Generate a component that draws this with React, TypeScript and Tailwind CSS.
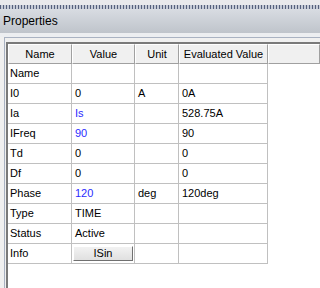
import React from "react";

const rows: [string, string, string, string, string?][] = [
  ["Name", "", "", ""],
  ["I0", "0", "A", "0A"],
  ["Ia", "Is", "", "528.75A", "blue"],
  ["IFreq", "90", "", "90", "blue"],
  ["Td", "0", "", "0"],
  ["Df", "0", "", "0"],
  ["Phase", "120", "deg", "120deg", "blue"],
  ["Type", "TIME", "", ""],
  ["Status", "Active", "", ""],
];

function HeaderCell({ children, className = "" }: any) {
  return (
    <div
      className={`flex h-[20px] items-center justify-center border-t border-l border-white border-r border-b border-r-[#a0a0a0] border-b-[#a0a0a0] bg-[#f0f0f0] ${className}`}
    >
      {children}
    </div>
  );
}

export default function App() {
  return (
    <div
      className="flex h-[288px] w-[320px] flex-col overflow-hidden bg-[#f0f0f0] text-[11px] text-black"
      style={{ fontFamily: '"Liberation Sans", Arial, sans-serif' }}
    >
      <div className="h-[5px] bg-[#e8e9ec]" />
      <div className="h-[4px] bg-[linear-gradient(90deg,#55607c_50%,#c4cad6_50%)] bg-[length:3px_2px]" />
      <div className="flex h-[24px] items-center bg-[linear-gradient(#d8dce2,#bfc4cb)] pl-[3px] text-[12px]">
        Properties
      </div>
      <div className="h-[4px] bg-[#eceef1]" />

      <div className="ml-[4px] flex flex-1 flex-col border-t border-l border-[#a9b2c2] bg-[#f0f0f0] pt-[4px] pl-[1px]">
        <div className="flex flex-1 flex-col border-t-2 border-l-2 border-[#7a7a7a] bg-white">
          <div className="flex">
            <HeaderCell className="w-[64px]">Name</HeaderCell>
            <HeaderCell className="w-[63px]">Value</HeaderCell>
            <HeaderCell className="w-[44px]">Unit</HeaderCell>
            <HeaderCell className="w-[89px]">Evaluated Value</HeaderCell>
            <HeaderCell className="flex-1" />
          </div>
          <div className="flex w-[260px] flex-col">
            {rows.map(([name, value, unit, evald, color]) => (
              <div key={name} className="flex h-[20px] border-b border-[#c0c0c0]">
                <div className="flex w-[64px] items-center border-r border-[#c0c0c0] pl-[2px]">{name}</div>
                <div
                  className={`flex w-[63px] items-center border-r border-[#c0c0c0] pl-[3px] ${
                    color ? "text-[#2b2bff]" : ""
                  }`}
                >
                  {value}
                </div>
                <div className="flex w-[44px] items-center border-r border-[#c0c0c0] pl-[3px]">{unit}</div>
                <div className="flex w-[89px] items-center border-r border-[#c0c0c0] pl-[3px]">{evald}</div>
              </div>
            ))}
            <div className="flex h-[20px] border-b border-[#c0c0c0]">
              <div className="flex w-[64px] items-center border-r border-[#c0c0c0] pl-[2px]">Info</div>
              <div className="flex w-[63px] items-center border-r border-[#c0c0c0] pl-[1px]">
                <button className="flex h-[15px] w-[60px] items-center justify-center border border-t-white border-l-white border-r-[#707070] border-b-[#707070] bg-[linear-gradient(#f2f2f2,#e0e0e0)] text-[11px]">
                  ISin
                </button>
              </div>
              <div className="w-[44px] border-r border-[#c0c0c0]" />
              <div className="w-[89px] border-r border-[#c0c0c0]" />
            </div>
          </div>
        </div>
      </div>
    </div>
  );
}
